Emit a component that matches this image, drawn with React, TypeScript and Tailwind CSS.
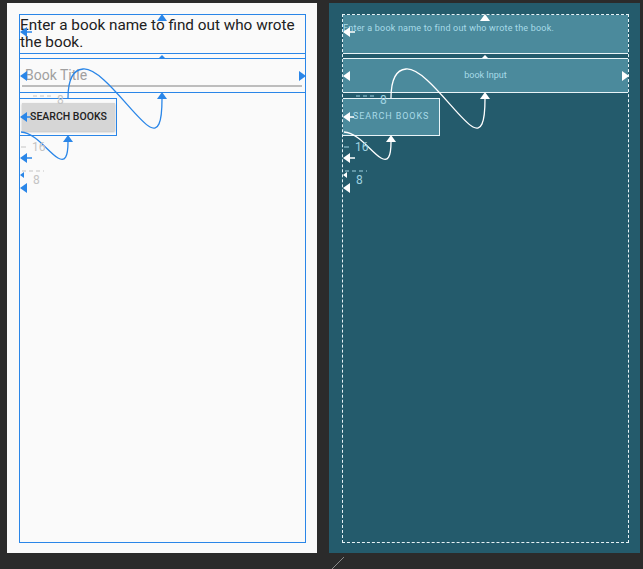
import React from 'react';

// Android Studio layout editor: design view (left) + blueprint view (right)

const BLUE = '#2a86e8';

function Marks({ color, label, dx }: { color: string; label: string; dx: number }) {
  const up = (x: number, y: number) => `${x - 5},${y + 7} ${x + 5},${y + 7} ${x},${y}`;
  const left = (x: number, y: number) => `${x},${y} ${x + 7},${y - 5} ${x + 7},${y + 5}`;
  const right = (x: number, y: number) => `${x},${y} ${x - 7},${y - 5} ${x - 7},${y + 5}`;
  return (
    <g transform={`translate(${dx},0)`} fill={color} stroke="none">
      {/* text view */}
      <polygon points={up(162, 14)} />
      <polygon points={left(20, 32)} />
      <line x1={26} y1={32} x2={32} y2={32} stroke={color} strokeWidth={1.5} />
      <polygon points="159,58 165,58 162,55" />
      {/* edit text */}
      <polygon points={left(20, 76)} />
      <polygon points={right(306, 76)} />
      <polygon points={up(162, 92)} />
      <path d="M162 99 C162 124, 158 131, 150 127 C136 120, 102 67, 83 69 C71 70, 68 84, 68 98" fill="none" stroke={color} strokeWidth={1.3} />
      {/* button */}
      <polygon points={left(20, 117)} />
      <line x1={26} y1={117} x2={31} y2={117} stroke={color} strokeWidth={1.5} />
      <polygon points={up(68, 135)} />
      <path d="M68 142 C68 157, 65 162, 58 158 C48 152, 36 133, 21 132" fill="none" stroke={color} strokeWidth={1.3} />
      <polygon points={left(20, 158)} />
      <line x1={26} y1={158} x2={32} y2={158} stroke={color} strokeWidth={1.5} />
      <polygon points="20,175 24,172 24,178" />
      <polygon points={left(20, 188)} />
      {/* margins */}
      <line x1={33} y1={96} x2={52} y2={96} stroke={label} strokeWidth={1} strokeDasharray="4 3" />
      <text x={57} y={104} fontSize={12} fill={label} fontFamily="Roboto, sans-serif">8</text>
      <line x1={21} y1={147} x2={26} y2={147} stroke={label} strokeWidth={1} />
      <text x={32} y={151} fontSize={12} fill={label} fontFamily="Roboto, sans-serif">16</text>
      <line x1={22} y1={171} x2={44} y2={171} stroke={label} strokeWidth={1} strokeDasharray="4 3" />
      <text x={33} y={184} fontSize={12} fill={label} fontFamily="Roboto, sans-serif">8</text>
    </g>
  );
}

export default function App() {
  return (
    <div className="relative w-[643px] h-[569px] overflow-hidden bg-[#2b2b2b] font-['Roboto',sans-serif]">
      <div className="flex gap-[12px] pl-[7px] pt-[3px]">
        {/* design view */}
        <div className="w-[310px] h-[550px] bg-[#fafafa] pl-[12px] pr-[11px] pt-[11px] pb-[10px]">
          <div className="h-full border border-[#2a86e8] flex flex-col">
            <div className="h-[39px] border-b border-[#2a86e8] pt-[2px] text-[15.3px] leading-[17px] text-[#212121]">
              Enter a book name to find out who wrote the book.
            </div>
            <div className="mt-[4px] h-[35px] border-y border-[#2a86e8] flex flex-col">
              <div className="pl-[5px] pt-[8px] text-[14px] leading-[16px] text-[#a0a0a0]">Book Title</div>
              <div className="mt-[2px] ml-[2px] mr-[3px] h-[2px] bg-[#bdbdbd]" />
            </div>
            <div className="mt-[5px] w-[97px] h-[38px] border-y border-r border-[#2a86e8]">
              <div className="mt-[4px] ml-[2px] w-[93px] h-[28px] bg-[#d6d6d6] shadow-[0_1px_2px_rgba(0,0,0,0.25)] flex items-center justify-center text-[10.5px] font-medium text-[#222]">
                SEARCH BOOKS
              </div>
            </div>
          </div>
        </div>

        {/* blueprint view */}
        <div className="w-[311px] h-[550px] bg-[#245b6c] pl-[13px] pr-[11px] pt-[11px] pb-[10px]">
          <div className="h-full border border-dashed border-[#e8f4f8] flex flex-col">
            <div className="h-[39px] bg-[#4b8a9c] border-b border-[#e8f4f8] pt-[7px] text-[9px] leading-[12px] tracking-[0.2px] text-[#a8dbe8] whitespace-nowrap">
              Enter a book name to find out who wrote the book.
            </div>
            <div className="mt-[4px] h-[35px] bg-[#4b8a9c] border-y border-[#e8f4f8] flex items-center justify-center text-[9px] text-[#a8dbe8]">
              book Input
            </div>
            <div className="mt-[5px] w-[97px] h-[38px] bg-[#4b8a9c] border-y border-r border-[#e8f4f8] flex items-center pl-[10px] text-[9px] tracking-[0.9px] text-[#a8dbe8]">
              SEARCH BOOKS
            </div>
          </div>
        </div>
      </div>

      <svg className="absolute inset-0 pointer-events-none" width={643} height={569} viewBox="0 0 643 569">
        <Marks color={BLUE} label="#c4c4c4" dx={0} />
        <Marks color="#ffffff" label="#9fd2e0" dx={323} />
        <line x1={332} y1={569} x2={344} y2={557} stroke="#8a8a8a" strokeWidth={1} />
      </svg>
    </div>
  );
}
